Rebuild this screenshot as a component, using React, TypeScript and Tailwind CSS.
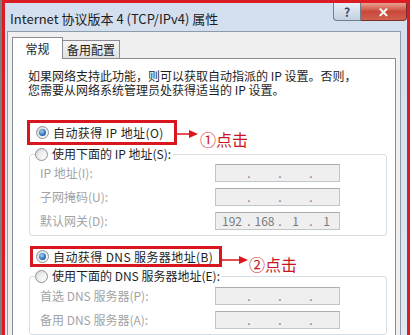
import React from "react";

const cjk = { fontFamily: '"Noto Sans CJK SC", "Noto Sans", sans-serif' };

function Radio({ checked }: { checked?: boolean }) {
  return (
    <span className="flex h-[13px] w-[13px] shrink-0 items-center justify-center rounded-full border border-[#8f9193] bg-gradient-to-br from-[#d4d6d8] to-[#ffffff]">
      {checked ? (
        <span className="h-[7px] w-[7px] rounded-full bg-[radial-gradient(circle_at_40%_35%,#9fd3f7,#2a6fb8_60%,#16437a)]" />
      ) : (
        <span className="h-[7px] w-[7px] rounded-full bg-gradient-to-br from-[#e4e5e6] to-[#fafafa]" />
      )}
    </span>
  );
}

function IpBox({ value }: { value?: string[] }) {
  const v = value ?? ["", "", "", ""];
  return (
    <div className="flex h-[18px] w-[125px] items-center border border-[#c3c6c9] border-t-[#a9adb1] bg-[#efefef] pl-[2px] text-[12px] leading-none text-[#7a7a7a]">
      <span className="w-[28px] text-center">{v[0]}</span>
      <span className="w-[6px] text-center">.</span>
      <span className="w-[25px] text-center">{v[1]}</span>
      <span className="w-[6px] text-center">.</span>
      <span className="w-[25px] text-center">{v[2]}</span>
      <span className="w-[6px] text-center">.</span>
      <span className="w-[25px] text-center">{v[3]}</span>
    </div>
  );
}

function Field({ label, value }: { label: string; value?: string[] }) {
  return (
    <div className="flex h-[18px] items-center">
      <span className="w-[175px] text-[12px] leading-[14px] text-[#a3a3a3]">{label}</span>
      <IpBox value={value} />
    </div>
  );
}

function Arrow({ w }: { w: number }) {
  return (
    <svg width={w} height="10" viewBox={`0 0 ${w} 10`} className="shrink-0">
      <line x1="0" y1="5" x2={w - 8} y2="5" stroke="#d9161e" strokeWidth="1.5" />
      <polygon points={`${w - 9},1 ${w},5 ${w - 9},9`} fill="#d9161e" />
    </svg>
  );
}

function Group({ legend, children, className }: { legend: string; children: React.ReactNode; className: string }) {
  return (
    <div className={`ml-[16px] mr-[8px] rounded-[3px] border border-[#d5dfe5] pb-[5px] pl-[10px] ${className}`}>
      <div className="-ml-[5px] -mt-[8px] flex h-[14px] w-fit items-center bg-white pr-[2px]">
        <Radio />
        <span className="ml-[4px] text-[12px] leading-[14px] text-[#1e1e1e]">{legend}</span>
      </div>
      {children}
    </div>
  );
}

export default function App() {
  return (
    <div className="flex h-[335px] w-[412px] overflow-hidden bg-white" style={cjk}>
      <div className="w-[2px] shrink-0 bg-[#7d7d7d]" />
      <div className="flex w-[408px] shrink-0 flex-col border-x-[3px] border-t-[3px] border-[#dc1c24] bg-gradient-to-b from-[#d3dfee] to-[#dfe8f3]">
        {/* title bar */}
        <div className="flex h-[28px] shrink-0 items-start justify-between">
          <span className="pl-[5px] pt-[8px] text-[13px] leading-[16px] text-[#1e1e1e]">
            Internet 协议版本 4 (TCP/IPv4) 属性
          </span>
          <div className="flex">
            <div className="flex h-[18px] w-[28px] items-center justify-center rounded-bl-[4px] border border-t-0 border-[#6f7d8f] bg-gradient-to-b from-[#e9eff6] to-[#c3d0e0] text-[12px] font-bold leading-none text-[#3b4a5e]">
              ?
            </div>
            <div className="flex h-[18px] w-[46px] items-center justify-center rounded-br-[4px] border border-l-0 border-t-0 border-[#7a2f2a] bg-gradient-to-b from-[#e8a093] via-[#c9483b] to-[#d1604d] text-[13px] font-bold leading-none text-white">
              ✕
            </div>
          </div>
        </div>

        {/* client area */}
        <div className="ml-[2px] mr-[6px] flex-1 border border-b-0 border-[#8d9bab] bg-[#f0f0f0] px-[4px] pt-[5px]">
          <div className="flex items-end">
            <div className="relative z-10 -mb-px flex h-[22px] w-[51px] items-center justify-center border border-b-0 border-[#898c95] bg-white text-[12px] text-[#1e1e1e]">
              常规
            </div>
            <div className="flex h-[18px] w-[57px] items-center justify-center border border-b-0 border-l-0 border-[#898c95] bg-gradient-to-b from-[#f5f5f5] to-[#e1e1e1] text-[12px] text-[#1e1e1e]">
              备用配置
            </div>
          </div>
          <div className="h-[300px] border border-[#898c95] bg-white pt-[10px]">
            <p className="pl-[15px] text-[12px] leading-[14px] text-[#1e1e1e]">
              如果网络支持此功能，则可以获取自动指派的 IP 设置。否则，
            </p>
            <p className="pl-[15px] text-[12px] leading-[14px] text-[#1e1e1e]">
              您需要从网络系统管理员处获得适当的 IP 设置。
            </p>

            {/* IP auto */}
            <div className="mt-[23px] flex h-[25px] items-start">
              <div className="ml-[14px] flex h-[25px] w-[150px] shrink-0 items-center border-[3px] border-[#d9161e] pl-[6px]">
                <Radio checked />
                <span className="ml-[4px] text-[12px] leading-[14px] tracking-[0.4px] text-[#1e1e1e]">自动获得 IP 地址(O)</span>
              </div>
              <div className="mt-[9px]">
                <Arrow w={21} />
              </div>
              <span className="ml-[2px] mt-[10px] text-[16px] leading-[18px] text-[#c8161e]">①点击</span>
            </div>

            <Group legend="使用下面的 IP 地址(S):" className="mt-[9px]">
              <div className="mt-[3px] flex flex-col gap-[6px]">
                <Field label="IP 地址(I):" />
                <Field label="子网掩码(U):" />
                <Field label="默认网关(D):" value={["192", "168", "1", "1"]} />
              </div>
            </Group>

            {/* DNS auto */}
            <div className="mt-[10px] flex h-[21px] items-start">
              <div className="ml-[17px] flex h-[21px] w-[192px] shrink-0 items-center border-[3px] border-[#d9161e] pl-[3px]">
                <Radio checked />
                <span className="ml-[4px] text-[12px] leading-[14px] tracking-[0.4px] text-[#1e1e1e]">自动获得 DNS 服务器地址(B)</span>
              </div>
              <div className="mt-[9px]">
                <Arrow w={26} />
              </div>
              <span className="ml-[1px] mt-[9px] text-[16px] leading-[18px] text-[#c8161e]">②点击</span>
            </div>

            <Group legend="使用下面的 DNS 服务器地址(E):" className="mt-[9px]">
              <div className="mt-[4px] flex flex-col gap-[6px]">
                <Field label="首选 DNS 服务器(P):" />
                <Field label="备用 DNS 服务器(A):" />
              </div>
            </Group>
          </div>
        </div>
      </div>
      <div className="flex-1 bg-white" />
    </div>
  );
}
